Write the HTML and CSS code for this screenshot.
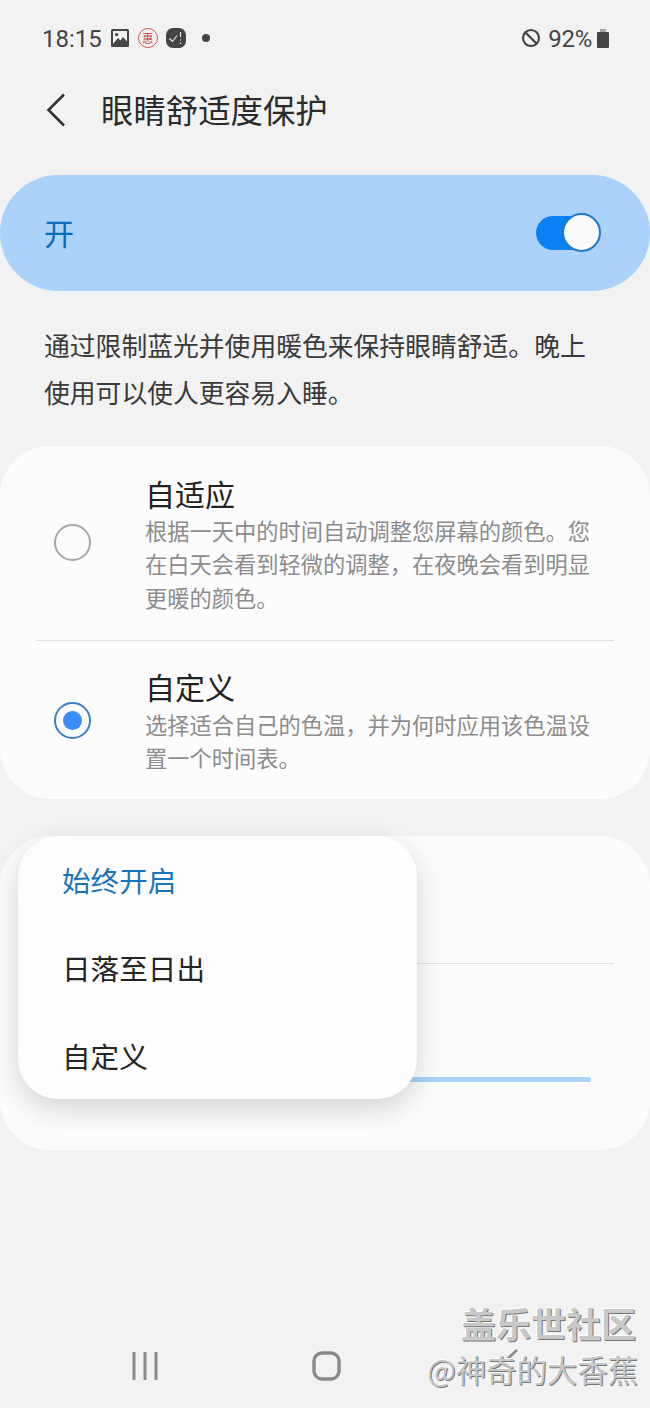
FILE: index.html
```html
<!DOCTYPE html>
<html lang="zh-CN">
<head>
    <meta charset="UTF-8">
    <meta name="viewport" content="width=device-width, initial-scale=1.0">
    <title>眼睛舒适度保护</title>
    <link rel="stylesheet" href="styles.css">
</head>
<body>
    <div class="status-bar">
        <div class="status-left">
            <span class="clock">18:15</span>
            <svg class="icon-picture" width="18" height="18" viewBox="0 0 18 18">
                <rect x="0" y="0" width="18" height="18" rx="1.5" fill="#444"/>
                <rect x="2" y="2" width="14" height="14" fill="#f2f2f2"/>
                <circle cx="5.6" cy="5.6" r="1.7" fill="#444"/>
                <path d="M2 15 L7 9 L9.5 11.5 L12 8 L16 12.5 V16 H2 Z" fill="#444"/>
            </svg>
            <span class="badge-red"><span class="badge-red-text">惠</span></span>
            <svg class="icon-wear" width="20" height="20" viewBox="0 0 20 20">
                <rect width="20" height="20" rx="7" fill="#444"/>
                <path d="M3.5 10.5 L6.5 13.5 L11 7.5" fill="none" stroke="#eee" stroke-width="1.1"/>
                <path d="M14.5 4 V9 M14.5 11.5 V12.6 M14.5 14.5 V16" stroke="#eee" stroke-width="1.1"/>
            </svg>
            <span class="status-dot"></span>
        </div>
        <div class="status-right">
            <svg width="20" height="20" viewBox="0 0 20 20">
                <circle cx="10" cy="10" r="8" fill="none" stroke="#444" stroke-width="2.2"/>
                <path d="M4.5 4.5 L15.5 15.5" stroke="#444" stroke-width="2.2"/>
            </svg>
            <span class="battery-text">92%</span>
            <span class="battery"></span>
        </div>
    </div>

    <div class="header">
        <svg class="back" width="20" height="34" viewBox="0 0 20 34">
            <path d="M18 1.5 L2.5 17 L18 32.5" fill="none" stroke="#333" stroke-width="2.6"/>
        </svg>
        <h1>眼睛舒适度保护</h1>
    </div>

    <div class="master-switch">
        <span class="master-label">开</span>
        <span class="toggle"><span class="toggle-thumb"></span></span>
    </div>

    <p class="desc">通过限制蓝光并使用暖色来保持眼睛舒适。晚上使用可以使人更容易入睡。</p>

    <div class="card">
        <div class="option option-first">
            <span class="radio"></span>
            <div class="option-text">
                <div class="option-title">自适应</div>
                <div class="option-sub">根据一天中的时间自动调整您屏幕的颜色。您在白天会看到轻微的调整，在夜晚会看到明显更暖的颜色。</div>
            </div>
        </div>
        <div class="divider"></div>
        <div class="option option-second">
            <span class="radio radio-on"></span>
            <div class="option-text">
                <div class="option-title">自定义</div>
                <div class="option-sub">选择适合自己的色温，并为何时应用该色温设置一个时间表。</div>
            </div>
        </div>
    </div>

    <div class="card card-schedule">
        <div class="blank-row"></div>
        <div class="divider"></div>
        <div class="slider"></div>
        <div class="menu">
            <div class="menu-item menu-item-active">始终开启</div>
            <div class="menu-item">日落至日出</div>
            <div class="menu-item">自定义</div>
        </div>
    </div>

    <div class="nav-bar">
        <svg width="26" height="28" viewBox="0 0 26 28">
            <path d="M2 1 V27 M13 1 V27 M24 1 V27" stroke="#8a8a8a" stroke-width="3" stroke-linecap="round"/>
        </svg>
        <svg width="29" height="30" viewBox="0 0 29 30">
            <rect x="2" y="2" width="25" height="26" rx="8" fill="none" stroke="#8a8a8a" stroke-width="3.4"/>
        </svg>
        <svg class="nav-back" width="16" height="28" viewBox="0 0 16 28">
            <path d="M15 1 L1 14" fill="none" stroke="#8a8a8a" stroke-width="2.6"/>
        </svg>
    </div>

    <div class="watermark">
        <div class="watermark-top">盖乐世社区</div>
        <div class="watermark-bottom">@神奇的大香蕉</div>
    </div>
</body>
</html>
```

FILE: styles.css
```css
body {
    margin: 0;
    width: 650px;
    height: 1408px;
    position: relative;
    overflow: hidden;
    background: #f2f2f2;
    color: #252525;
    font-family: "Noto Sans CJK SC", "Roboto", sans-serif;
}

.status-bar {
    height: 76px;
    padding: 0 41px 0 42px;
    display: flex;
    justify-content: space-between;
    align-items: center;
    font-family: "Roboto", sans-serif;
    font-size: 24px;
    color: #444;
}

.status-left,
.status-right {
    display: flex;
    align-items: center;
}

.clock,
.battery-text {
    padding-top: 2px;
}

.icon-picture {
    margin-left: 9px;
}

.badge-red {
    width: 20px;
    height: 20px;
    margin-left: 9px;
    box-sizing: border-box;
    border: 1.5px solid #d0574a;
    border-radius: 50%;
    display: flex;
    align-items: center;
    justify-content: center;
}

.badge-red-text {
    font-family: "Noto Sans CJK SC", sans-serif;
    font-size: 11px;
    line-height: 12px;
    color: #c8402f;
}

.icon-wear {
    margin-left: 8px;
}

.status-dot {
    width: 8px;
    height: 8px;
    margin-left: 16px;
    border-radius: 50%;
    background: #444;
}

.battery-text {
    margin-left: 7px;
    letter-spacing: -0.3px;
}

.battery {
    width: 12px;
    height: 16px;
    margin-left: 5px;
    margin-top: 3px;
    position: relative;
    background: #444;
    border-radius: 1px;
}

.battery::before {
    content: "";
    position: absolute;
    left: 3px;
    top: -3px;
    width: 6px;
    height: 3px;
    background: #a5a5a5;
}

.header {
    height: 68px;
    padding-left: 46px;
    display: flex;
    align-items: center;
}

h1 {
    margin: 0 0 2px 35px;
    font-size: 32.4px;
    font-weight: 400;
    line-height: 44px;
    color: #2b2b2b;
}

.master-switch {
    margin-top: 31px;
    height: 116px;
    padding: 0 60px 0 44px;
    display: flex;
    justify-content: space-between;
    align-items: center;
    background: #aad2fa;
    border-radius: 58px;
}

.master-label {
    padding-bottom: 3px;
    font-size: 30px;
    line-height: 40px;
    color: #0b6bbd;
}

.toggle {
    width: 54px;
    height: 34px;
    position: relative;
    background: #0a82f5;
    border-radius: 17px;
}

.toggle-thumb {
    position: absolute;
    right: -11px;
    top: -3px;
    width: 35px;
    height: 35px;
    background: #fafafa;
    border: 2px solid #1f77cf;
    border-radius: 50%;
}

.desc {
    margin: 30px 44px 31px;
    font-size: 25.8px;
    line-height: 47px;
    color: #3a3a3a;
}

.card {
    margin-bottom: 37px;
    background: #fcfcfc;
    border-radius: 50px;
}

.option {
    display: flex;
    align-items: center;
    padding-left: 54px;
}

.option-first {
    height: 194px;
}

.option-second {
    height: 158px;
}

.option-first .radio {
    margin-bottom: 1px;
}

.option-text {
    margin-left: 54px;
    width: 450px;
    padding-top: 2px;
}

.option-title {
    padding-bottom: 2px;
    font-size: 30px;
    line-height: 38px;
    color: #222;
}

.option-second .option-title {
    padding-bottom: 4px;
    line-height: 36px;
}

.option-sub {
    font-size: 22.25px;
    line-height: 33.4px;
    color: #8c8c8c;
}

.radio {
    flex: none;
    box-sizing: border-box;
    width: 37px;
    height: 37px;
    border: 2px solid #a8a8a8;
    border-radius: 50%;
}

.radio-on {
    border-color: #3a80cc;
    position: relative;
}

.radio-on::after {
    content: "";
    position: absolute;
    left: 7px;
    top: 7px;
    width: 19px;
    height: 19px;
    background: #3b8cf7;
    border-radius: 50%;
}

.divider {
    height: 1px;
    margin: 0 36px;
    background: #e0e0e0;
}

.card-schedule {
    height: 314px;
    position: relative;
}

.blank-row {
    height: 127px;
}

.slider {
    margin: 113px 59px 0 60px;
    height: 5px;
    background: #aad2fa;
    border-radius: 3px;
}

.menu {
    position: absolute;
    left: 18px;
    top: 0;
    width: 399px;
    height: 263px;
    background: #fdfdfd;
    border-radius: 40px;
    box-shadow: 0 10px 28px rgba(0, 0, 0, 0.16);
}

.menu-item {
    height: 88px;
    box-sizing: border-box;
    padding: 0 0 2px 44px;
    display: flex;
    align-items: center;
    font-size: 28.6px;
    color: #252525;
}

.menu-item-active {
    color: #1a74bb;
}

.nav-bar {
    margin-top: 201px;
    padding-left: 132px;
    display: flex;
    align-items: center;
    gap: 154px;
}

.nav-back {
    margin-left: 7px;
    margin-top: -6px;
}

.watermark {
    position: absolute;
    right: 12px;
    top: 1298px;
    text-align: right;
    color: #c8c8c8;
    text-shadow: 1px 1px 0 #777, -1px -1px 0 #fff;
}

.watermark-top {
    padding-right: 2px;
    font-size: 35px;
    font-weight: 700;
    line-height: 50px;
}

.watermark-bottom {
    font-size: 30.4px;
    line-height: 42px;
}
```
